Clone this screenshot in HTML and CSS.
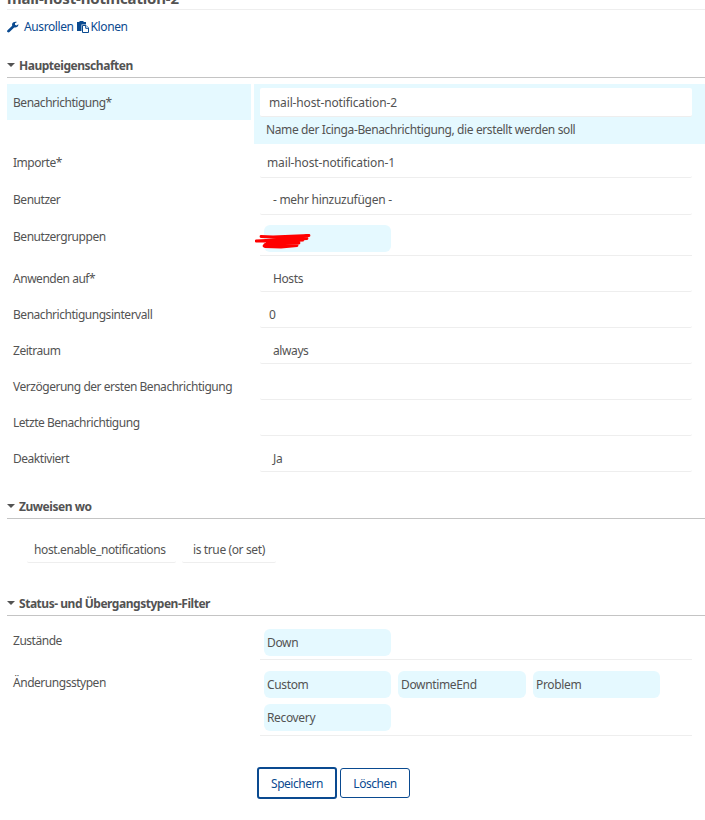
FILE: index.html
```html
<!DOCTYPE html>
<html lang="de">
<head>
  <meta charset="utf-8">
  <title>mail-host-notification-2</title>
  <link rel="stylesheet" href="styles.css">
</head>
<body>
  <div class="controls">
    <h1>mail-host-notification-2</h1>
  </div>

  <div class="actions">
    <a href="#">
      <svg class="icon wrench" viewBox="0 0 12 12"><path d="M11.4 3.2 9.4 4.5 8 3.8V2.3L10 1C8.2.2 6 .9 5.300 2.600 5 3.400 5 4 5.200 4.700L.5 9.200c-.6.600-.6 1.300 0 1.900s1.400.6 2 0l4.700-4.600c2.300.5 4.500-1 4.200-3.300z"/></svg>
      <span>Ausrollen</span>
    </a>
    <a href="#">
      <svg class="icon paste" viewBox="0 0 12 12"><path d="M0 1h2.500V0h4v1H9v2.500H4.500V10H0z"/><path class="sheet" d="M5.500 4.500H9L11.500 7v4.500h-6z"/><path class="fold" d="M8.700 4.500v2.800h2.800"/></svg>
      <span>Klonen</span>
    </a>
  </div>

  <form>
    <fieldset>
      <h3>Haupteigenschaften</h3>
      <div class="row active">
        <label>Benachrichtigung*</label>
        <div class="field">
          <div class="control input">mail-host-notification-2</div>
          <p class="description">Name der Icinga-Benachrichtigung, die erstellt werden soll</p>
        </div>
      </div>
      <div class="row">
        <label>Importe*</label>
        <div class="field"><div class="control list">mail-host-notification-1</div></div>
      </div>
      <div class="row">
        <label>Benutzer</label>
        <div class="field"><div class="control list more">- mehr hinzuzufügen -</div></div>
      </div>
      <div class="row">
        <label>Benutzergruppen</label>
        <div class="field">
          <ul class="chips">
            <li class="redacted">
              <svg class="scribble" viewBox="0 0 56 16"><path d="M6 3.500 18 4 54 2.500 22 4 52 5.500 1 8 48 7 12 9 44 10 14 10.500 42 12 18 12.500 9 13 10 11.500 18 9 40 8M10 13.500 26 14 42 12.500"/></svg>
            </li>
          </ul>
        </div>
      </div>
      <div class="row">
        <label>Anwenden auf*</label>
        <div class="field"><div class="control select">Hosts</div></div>
      </div>
      <div class="row">
        <label>Benachrichtigungsintervall</label>
        <div class="field"><div class="control input">0</div></div>
      </div>
      <div class="row">
        <label>Zeitraum</label>
        <div class="field"><div class="control select">always</div></div>
      </div>
      <div class="row">
        <label>Verzögerung der ersten Benachrichtigung</label>
        <div class="field"><div class="control input"></div></div>
      </div>
      <div class="row">
        <label>Letzte Benachrichtigung</label>
        <div class="field"><div class="control input"></div></div>
      </div>
      <div class="row">
        <label>Deaktiviert</label>
        <div class="field"><div class="control select">Ja</div></div>
      </div>
    </fieldset>

    <fieldset>
      <h3>Zuweisen wo</h3>
      <div class="filter">
        <span class="column">host.enable_notifications</span>
        <span class="operator">is true (or set)</span>
      </div>
    </fieldset>

    <fieldset>
      <h3>Status- und Übergangstypen-Filter</h3>
      <div class="row">
        <label>Zustände</label>
        <div class="field">
          <ul class="chips">
            <li>Down</li>
          </ul>
        </div>
      </div>
      <div class="row">
        <label>Änderungsstypen</label>
        <div class="field">
          <ul class="chips multiline">
            <li>Custom</li>
            <li>DowntimeEnd</li>
            <li>Problem</li>
            <li>Recovery</li>
          </ul>
        </div>
      </div>
    </fieldset>

    <div class="buttons">
      <button type="button" class="primary">Speichern</button>
      <button type="button">Löschen</button>
    </div>
  </form>
</body>
</html>
```

FILE: styles.css
```css
* {
  box-sizing: border-box;
}

body {
  margin: 0;
  padding-left: 7px;
  height: 820px;
  overflow: hidden;
  background-color: #fff;
  color: #535353;
  font-family: "Noto Sans", sans-serif;
  font-size: 12px;
  line-height: 18px;
  letter-spacing: -0.47px;
}

.controls {
  display: flex;
  align-items: flex-end;
  height: 10px;
  border-bottom: 1px solid #eee;
  overflow: hidden;
}

h1 {
  margin: 0;
  font-size: 15px;
  line-height: 22px;
  letter-spacing: -0.17px;
}

.actions {
  display: flex;
  gap: 3px;
  height: 44px;
  padding-top: 8px;
}

.actions a {
  display: flex;
  height: 18px;
  color: #0a4a90;
  text-decoration: none;
  letter-spacing: -0.4px;
}

.icon {
  width: 12px;
  height: 12px;
  margin-top: 3px;
  fill: #0a4a90;
}

.wrench {
  margin-right: 5px;
}

.paste {
  margin-right: 2px;
}

.sheet,
.fold {
  fill: #fff;
  stroke: #0a4a90;
}

form,
fieldset,
ul,
p {
  margin: 0;
  padding: 0;
  border: none;
  list-style: none;
}

fieldset {
  margin-bottom: 19px;
}

h3 {
  display: flex;
  align-items: center;
  height: 24px;
  margin: 0 0 6px;
  border-bottom: 1px solid #c4c4c4;
  font-size: 12px;
}

h3::before {
  content: "";
  margin: 0 4px 2px 0;
  border: 4px solid transparent;
  border-top-color: #535353;
  border-bottom: none;
}

.row {
  display: grid;
  grid-template-columns: 244px 1fr;
  column-gap: 3px;
  align-items: start;
}

label {
  height: 36px;
  padding: 10px 6px 8px;
  white-space: nowrap;
}

.field {
  padding: 4px 13px 4px 6px;
}

.control {
  height: 28px;
  padding: 6px 8px 3px;
  border-bottom: 1px solid #eee;
  border-radius: 2px;
}

.input {
  padding-left: 9px;
  letter-spacing: -0.14px;
}

.select {
  padding-left: 13px;
  letter-spacing: -0.4px;
}

.list {
  height: 30px;
  margin-bottom: -1px;
  padding-left: 7px;
  letter-spacing: -0.14px;
}

.more {
  padding-left: 13px;
  letter-spacing: -0.28px;
}

.active label,
.active .field {
  background-color: #e5f9ff;
}

.active .field {
  height: 60px;
}

.active .control {
  height: 29px;
  background-color: #fff;
}

.description {
  padding: 4px 6px;
  white-space: nowrap;
  letter-spacing: -0.38px;
}

.chips {
  display: grid;
  grid-template-columns: 127px 128px 127px;
  gap: 6px 7px;
  padding: 3px 4px;
  border-bottom: 1px solid #eee;
}

.multiline {
  padding-bottom: 4px;
}

.chips li {
  height: 27px;
  padding: 5px 3px 4px;
  border-radius: 6px;
  background-color: #e5f9ff;
  letter-spacing: -0.35px;
}

.scribble {
  display: block;
  width: 56px;
  height: 16px;
  margin: 3px 0 0 -12px;
  fill: none;
  stroke: #f00;
  stroke-width: 2.8;
  stroke-linecap: round;
  stroke-linejoin: round;
}

.filter {
  display: flex;
  gap: 6px;
  padding: 11px 20px 10px;
}

.filter span {
  width: 149px;
  height: 27px;
  padding: 5px 7px 3px;
  border-bottom: 1px solid #eee;
  border-radius: 2px;
  letter-spacing: -0.38px;
  white-space: nowrap;
}

.filter .operator {
  width: 94px;
  padding-left: 11px;
}

.buttons {
  display: flex;
  align-items: center;
  gap: 3px;
  padding: 8px 0 0 250px;
}

button {
  width: 70px;
  height: 30px;
  padding: 1px 0 0;
  border: 1px solid #0a4a90;
  border-radius: 3px;
  background-color: #fff;
  color: #0a4a90;
  font: inherit;
  letter-spacing: -0.47px;
}

.primary {
  width: 80px;
  height: 32px;
  border-width: 2px;
}
```
